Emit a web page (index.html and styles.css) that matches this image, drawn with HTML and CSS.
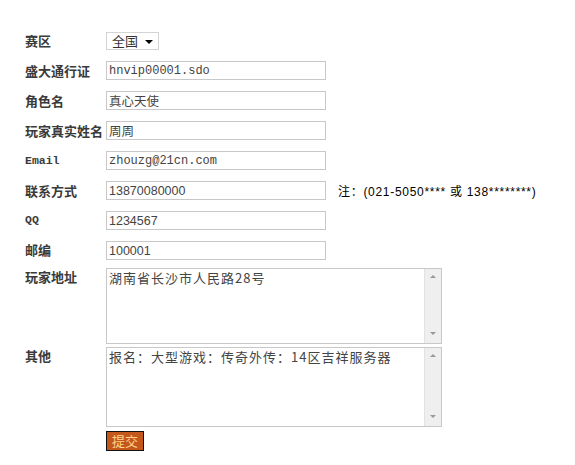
FILE: index.html
```html
<!DOCTYPE html>
<html lang="zh-CN">
<head>
    <meta charset="UTF-8">
    <title>报名表</title>
    <link rel="stylesheet" href="styles.css">
</head>
<body>
    <form class="signup">
        <div class="row">
            <label class="label">赛区</label>
            <span class="select-wrap">
                <select class="select">
                    <option>全国</option>
                </select>
            </span>
        </div>
        <div class="row">
            <label class="label">盛大通行证</label>
            <input class="field mono" type="text" value="hnvip00001.sdo">
        </div>
        <div class="row">
            <label class="label">角色名</label>
            <input class="field" type="text" value="真心天使">
        </div>
        <div class="row">
            <label class="label">玩家真实姓名</label>
            <input class="field" type="text" value="周周">
        </div>
        <div class="row">
            <label class="label latin">Email</label>
            <input class="field mono" type="text" value="zhouzg@21cn.com">
        </div>
        <div class="row">
            <label class="label">联系方式</label>
            <input class="field" type="text" value="13870080000">
            <span class="note">注：(021-5050**** 或 138********)</span>
        </div>
        <div class="row top">
            <label class="label latin">QQ</label>
            <input class="field" type="text" value="1234567">
        </div>
        <div class="row top">
            <label class="label">邮编</label>
            <input class="field" type="text" value="100001">
        </div>
        <div class="row top area-row">
            <label class="label">玩家地址</label>
            <div class="area">
                <textarea class="area-text">湖南省长沙市人民路28号</textarea>
                <div class="scrollbar"><span class="arrow up"></span><span class="arrow down"></span></div>
            </div>
        </div>
        <div class="row top area-row tall">
            <label class="label">其他</label>
            <div class="area">
                <textarea class="area-text">报名：大型游戏：传奇外传：14区吉祥服务器</textarea>
                <div class="scrollbar"><span class="arrow up"></span><span class="arrow down"></span></div>
            </div>
        </div>
        <div class="row submit-row">
            <span class="label"></span>
            <button class="submit" type="button">提交</button>
        </div>
    </form>
</body>
</html>
```

FILE: styles.css
```css
* {
    margin: 0;
    padding: 0;
    box-sizing: border-box;
}

body {
    font-family: "Noto Sans CJK SC", sans-serif;
    font-size: 12px;
    color: #333;
    background: #fff;
}

.signup {
    display: flex;
    flex-direction: column;
    gap: 11px;
    padding: 32px 0 0 25px;
}

.row {
    display: flex;
    align-items: center;
}

.row.top {
    align-items: flex-start;
}

.label {
    width: 81px;
    flex-shrink: 0;
    font-size: 13px;
    font-weight: bold;
    color: #3a3a3a;
    line-height: 16px;
}

.label.latin {
    font-family: "Liberation Mono", monospace;
    font-size: 11.5px;
}

.row.top .label {
    padding-top: 1px;
}

.select-wrap {
    position: relative;
    display: inline-block;
}

.select-wrap::after {
    content: "";
    position: absolute;
    right: 6px;
    top: 8px;
    border-left: 4px solid transparent;
    border-right: 4px solid transparent;
    border-top: 4px solid #000;
    pointer-events: none;
}

.select {
    appearance: none;
    -webkit-appearance: none;
    width: 53px;
    height: 18px;
    border: 1px solid #d4d4d4;
    background: #fff;
    font-family: "Noto Sans CJK SC", sans-serif;
    font-size: 13px;
    line-height: 16px;
    padding: 0 0 0 5px;
    color: #333;
}

.field {
    width: 220px;
    height: 19px;
    border: 1px solid #c8c8c8;
    padding: 0 2px;
    font-family: "Liberation Sans", "Noto Sans CJK SC", sans-serif;
    font-size: 12.5px;
    color: #444;
    outline: none;
}

.field.mono {
    font-family: "Liberation Mono", "Noto Sans CJK SC", monospace;
    font-size: 12px;
}

.note {
    margin-left: 12px;
    font-family: "Liberation Sans", "Noto Sans CJK SC", sans-serif;
    font-size: 12px;
    letter-spacing: 0.7px;
    color: #000;
}

.area-row {
    margin-top: -3px;
}

.area-row.tall {
    margin-top: -8px;
}

.area {
    display: flex;
    width: 336px;
    height: 76px;
    border: 1px solid #c8c8c8;
}

.tall .area {
    height: 80px;
}

.area-text {
    flex: 1;
    border: none;
    resize: none;
    outline: none;
    overflow: hidden;
    padding: 1px 2px;
    font-family: "Noto Sans CJK SC", sans-serif;
    font-size: 13px;
    letter-spacing: 1px;
    line-height: 16px;
    color: #444;
}

.scrollbar {
    width: 17px;
    background: #efefef;
    border-left: 1px solid #e2e2e2;
    display: flex;
    flex-direction: column;
    justify-content: space-between;
    align-items: center;
    padding: 6px 0 8px;
}

.arrow {
    width: 0;
    height: 0;
    border-left: 3px solid transparent;
    border-right: 3px solid transparent;
}

.arrow.up {
    border-bottom: 3px solid #999;
}

.arrow.down {
    border-top: 3px solid #999;
}

.submit-row {
    margin-top: -7px;
}

.submit {
    width: 38px;
    height: 20px;
    background: #c4571b;
    border: 1px solid #111;
    color: #ffd48a;
    font-family: "Noto Sans CJK SC", sans-serif;
    font-size: 13px;
    line-height: 16px;
    cursor: pointer;
}
```
